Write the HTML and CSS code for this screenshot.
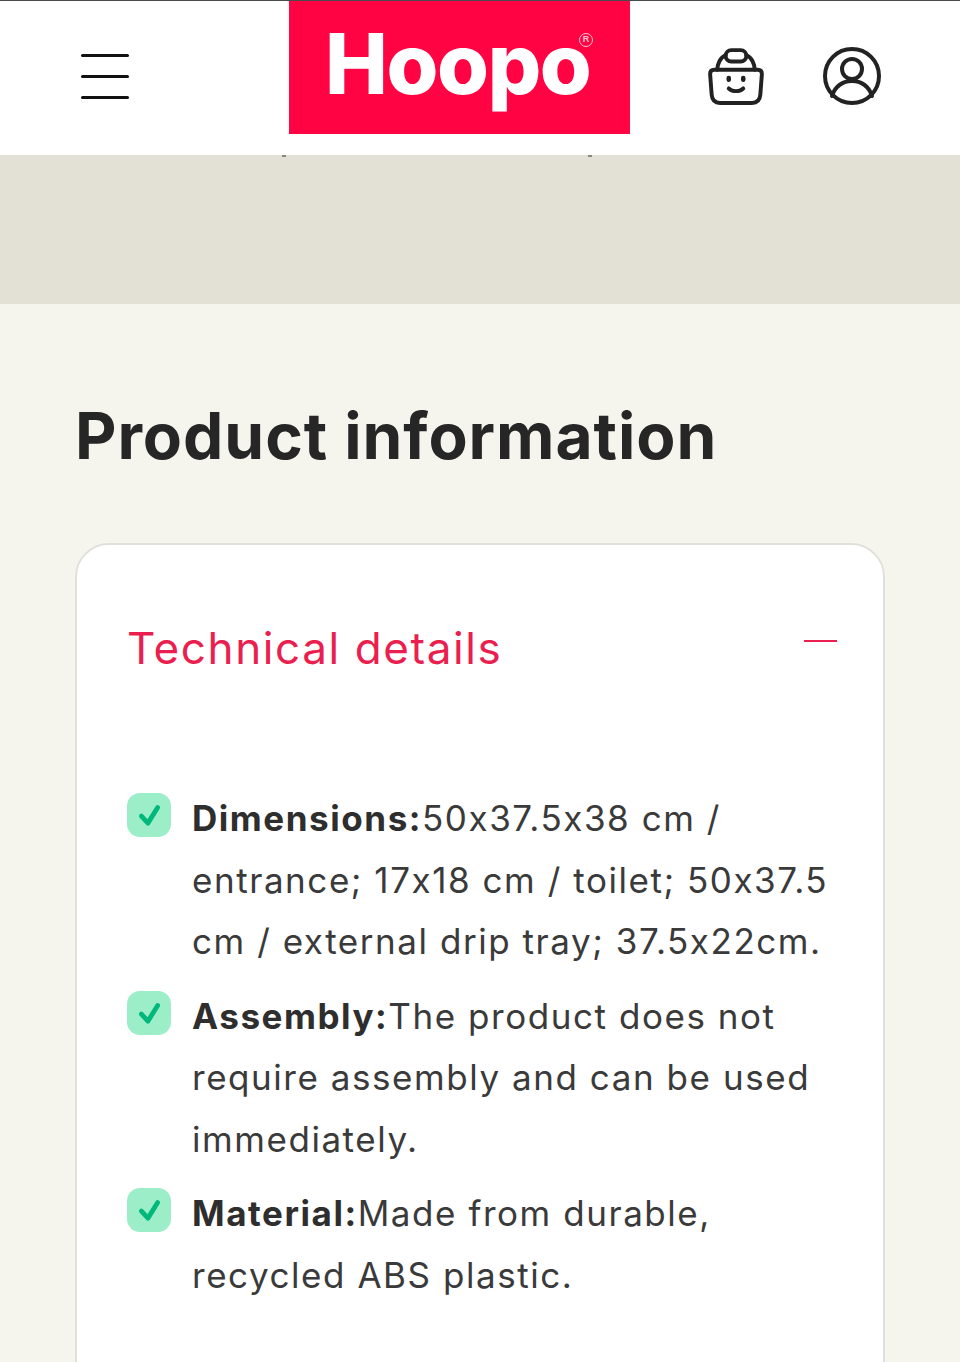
FILE: index.html
```html
<!DOCTYPE html>
<html lang="en">
<head>
    <meta charset="UTF-8">
    <meta name="viewport" content="width=device-width, initial-scale=1.0">
    <title>Hoopo - Product information</title>
    <link rel="stylesheet" href="styles.css">
</head>
<body>
    <header class="site-header">
        <button class="menu-button" aria-label="Menu">
            <span></span>
            <span></span>
            <span></span>
        </button>
        <a class="logo">Hoopo<span class="logo-mark">R</span></a>
        <div class="header-icons">
            <svg class="icon-basket" viewBox="3 1 54 56" fill="none" stroke="#222" stroke-width="3.8" stroke-linecap="round" stroke-linejoin="round">
                <rect x="20" y="4" width="20" height="11" rx="5.5"/>
                <path d="M20 9c-5 2-8 8-8 14M40 9c5 2 8 8 8 14"/>
                <path d="M5 27c0-2.500 1-4 4-4h42c3 0 4 1.500 4 4l-1.500 20c-.4 5-3 8-8 8h-31c-5 0-7.600-3-8-8z"/>
                <path d="M23 31v1.500M37 31v1.500" stroke-width="4.400"/>
                <path d="M23 41c4 3.500 10 3.500 14 0"/>
            </svg>
            <svg class="icon-user" viewBox="1 1 58 58" fill="none" stroke="#222" stroke-width="4" stroke-linecap="round">
                <circle cx="30" cy="30" r="27"/>
                <circle cx="30" cy="23" r="10"/>
                <path d="M10 50c3-10 11-15 20-15s17 5 20 15"/>
            </svg>
        </div>
    </header>

    <div class="promo-band">
        <span></span>
        <span></span>
    </div>

    <main class="content">
        <h1>Product information</h1>

        <section class="card">
            <div class="card-title">
                <h2>Technical details</h2>
                <span class="collapse-line"></span>
            </div>

            <ul class="details">
                <li>
                    <span class="check">
                        <svg viewBox="0 0 24 24" fill="none" stroke="#00b87c" stroke-width="4.400" stroke-linecap="round" stroke-linejoin="round"><path d="M5 13l6 6.500L20 5"/></svg>
                    </span>
                    <p><b>Dimensions:</b>50x37.5x38 cm / entrance; 17x18 cm / toilet; 50x37.5 cm / external drip tray; 37.5x22cm.</p>
                </li>
                <li>
                    <span class="check">
                        <svg viewBox="0 0 24 24" fill="none" stroke="#00b87c" stroke-width="4.400" stroke-linecap="round" stroke-linejoin="round"><path d="M5 13l6 6.500L20 5"/></svg>
                    </span>
                    <p><b>Assembly:</b>The product does not require assembly and can be used immediately.</p>
                </li>
                <li>
                    <span class="check">
                        <svg viewBox="0 0 24 24" fill="none" stroke="#00b87c" stroke-width="4.400" stroke-linecap="round" stroke-linejoin="round"><path d="M5 13l6 6.500L20 5"/></svg>
                    </span>
                    <p><b>Material:</b>Made from durable, recycled ABS plastic.</p>
                </li>
            </ul>
        </section>
    </main>
</body>
</html>
```

FILE: styles.css
```css
* {
    box-sizing: border-box;
}

html, body {
    margin: 0;
    padding: 0;
    height: 1362px;
    overflow: hidden;
    background-color: #f5f4ed;
    font-family: "Inter", "Liberation Sans", sans-serif;
    color: #2b2b2b;
}

/* Header */
.site-header {
    height: 155px;
    display: flex;
    align-items: flex-start;
    background-color: #fff;
    border-top: 1px solid #4a4a4a;
}

.menu-button {
    width: 289px;
    height: 154px;
    padding: 0 0 4px 81px;
    border: none;
    background: none;
    display: flex;
    flex-direction: column;
    justify-content: center;
    align-items: flex-start;
    gap: 18px;
}

.menu-button span {
    display: block;
    width: 48px;
    height: 3px;
    border-radius: 2px;
    background-color: #111;
}

.logo {
    position: relative;
    width: 341px;
    height: 133px;
    padding: 0 0 8px 36px;
    display: flex;
    align-items: center;
    background-color: #ff0342;
    color: #fff;
    font-family: "Inter", "Liberation Sans", sans-serif;
    font-weight: 800;
    font-size: 84px;
    letter-spacing: -1.4px;
    line-height: 1;
}

.logo-mark {
    position: absolute;
    top: 32px;
    left: 290px;
    width: 14px;
    height: 14px;
    border: 1.500px solid #ffc2d2;
    border-radius: 50%;
    color: #ffc2d2;
    font-family: "Liberation Sans", sans-serif;
    font-size: 9px;
    font-weight: 700;
    letter-spacing: 0;
    line-height: 11px;
    text-align: center;
}

.header-icons {
    height: 150px;
    margin-left: 78px;
    display: flex;
    align-items: center;
    gap: 59px;
}

.icon-basket {
    width: 56px;
    height: 58px;
    display: block;
}

.icon-user {
    width: 58px;
    height: 58px;
    display: block;
}

/* Band under the header */
.promo-band {
    height: 149px;
    padding: 0 368px 0 282px;
    display: flex;
    justify-content: space-between;
    align-items: flex-start;
    background-color: #e3e1d5;
}

.promo-band span {
    width: 4px;
    height: 2px;
    background-color: #8a8981;
}

/* Main content */
.content {
    padding: 96px 75px 0 75px;
}

h1 {
    margin: 0 0 71px;
    font-size: 64px;
    font-weight: 700;
    line-height: 72px;
    letter-spacing: 0.95px;
    color: #262626;
}

.card {
    height: 900px;
    padding: 73px 46px 0 50px;
    background-color: #fff;
    border: 2px solid #e1e1dc;
    border-radius: 34px;
}

.card-title {
    height: 60px;
    display: flex;
    justify-content: space-between;
    align-items: flex-start;
}

h2 {
    margin: 0;
    font-size: 44px;
    font-weight: 400;
    line-height: 60px;
    letter-spacing: 1.6px;
    color: #ea1f50;
}

.collapse-line {
    display: block;
    width: 33px;
    height: 2px;
    margin-top: 22px;
    background-color: #ea1f50;
}

.details {
    margin: 110px 0 0;
    padding: 0;
    list-style: none;
    display: flex;
    flex-direction: column;
    gap: 13px;
}

.details li {
    display: flex;
    align-items: flex-start;
    gap: 21px;
}

.check {
    flex: none;
    width: 44px;
    height: 44px;
    margin-top: 5px;
    display: flex;
    align-items: center;
    justify-content: center;
    border-radius: 13px;
    background-color: #9beec8;
}

.check svg {
    width: 26px;
    height: 26px;
}

.details p {
    margin: 0;
    font-size: 35px;
    line-height: 61.500px;
    letter-spacing: 1.55px;
    color: #3a3a3a;
}

.details b {
    font-weight: 700;
    color: #2e2e2e;
}
```
